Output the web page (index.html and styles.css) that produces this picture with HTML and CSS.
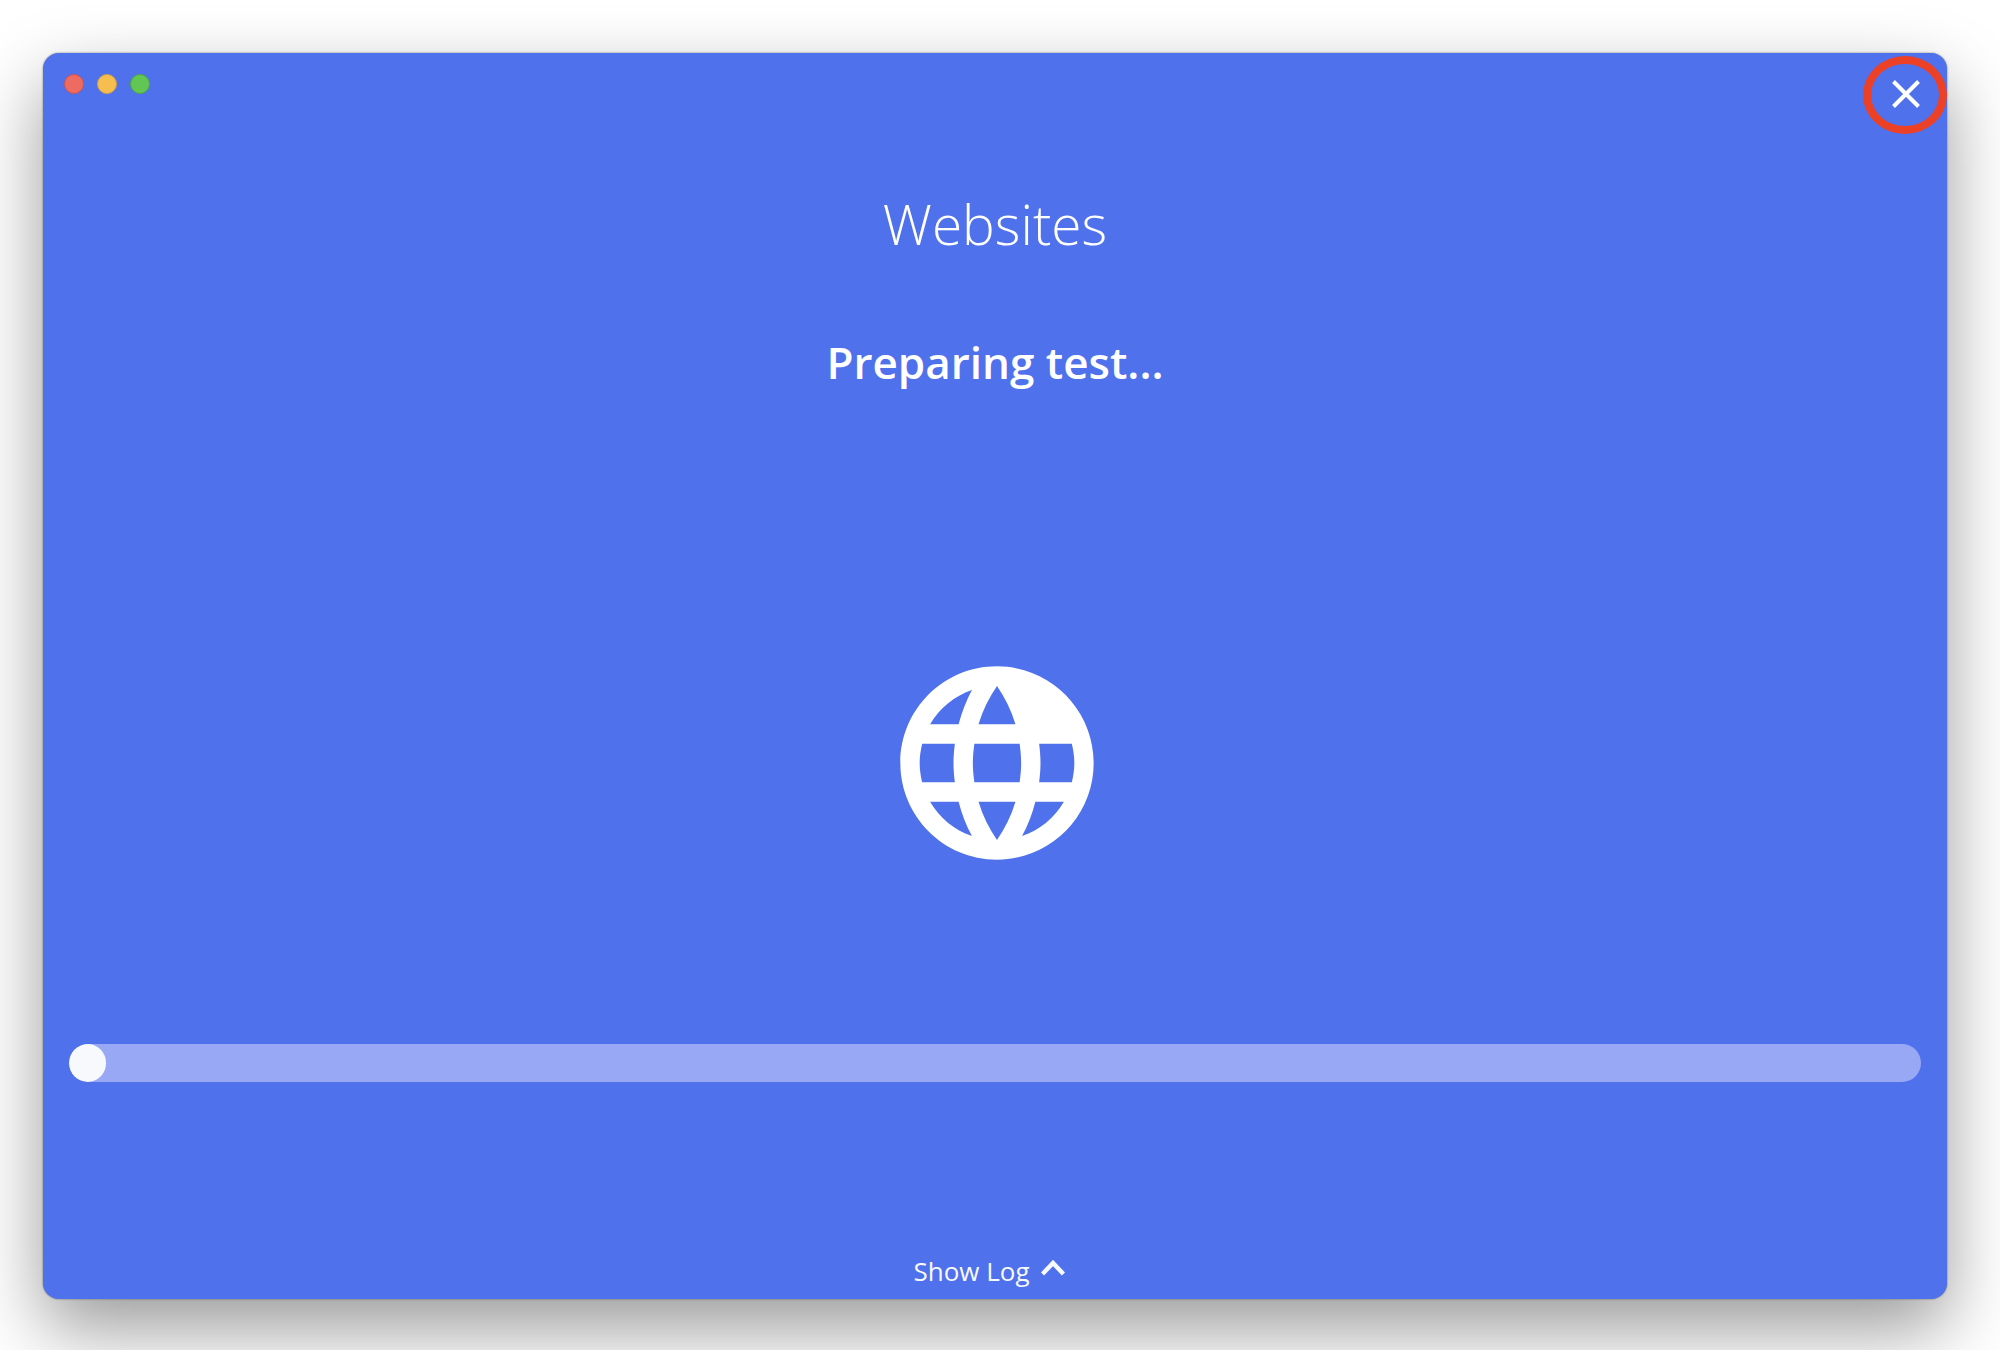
FILE: index.html
```
<!DOCTYPE html>
<html lang="en">
<head>
<meta charset="utf-8">
<title>Websites</title>
<link rel="stylesheet" href="styles.css">
</head>
<body>
<div class="window">
  <header class="titlebar">
    <div class="lights">
      <span class="light light-red"></span>
      <span class="light light-yellow"></span>
      <span class="light light-green"></span>
    </div>
    <button class="close" type="button" aria-label="Close">
      <svg width="28" height="28" viewBox="0 0 28 28" aria-hidden="true"><path d="M1.500 1.500l25 25M26.500 1.500l-25 25" fill="none" stroke="currentColor" stroke-width="4"/></svg>
    </button>
  </header>
  <main class="content">
    <h1 class="title">Websites</h1>
    <p class="status" id="status">Preparing test...</p>
    <div class="stage">
      <svg class="globe" viewBox="0 0 24 24" aria-hidden="true"><path fill="currentColor" fill-rule="evenodd" d="M11.99 2C6.47 2 2 6.48 2 12s4.47 10 9.99 10C17.52 22 22 17.52 22 12S17.52 2 11.99 2zM12 4.04c.83 1.2 1.48 2.53 1.91 3.96h-3.82c.43-1.43 1.08-2.76 1.91-3.96zM4.26 14C4.1 13.36 4 12.69 4 12s.1-1.36.26-2h3.38c-.08.66-.14 1.32-.14 2 0 .68.06 1.34.14 2H4.26zm.82 2h2.95c.32 1.25.78 2.45 1.38 3.56-1.84-.63-3.37-1.9-4.33-3.56zm2.95-8H5.08c.96-1.66 2.49-2.93 4.33-3.56C8.81 5.55 8.35 6.75 8.03 8zM12 19.96c-.83-1.2-1.48-2.53-1.91-3.96h3.82c-.43 1.43-1.08 2.76-1.91 3.96zM14.34 14H9.66c-.09-.66-.16-1.32-.16-2 0-.68.07-1.35.16-2h4.68c.09.65.16 1.32.16 2 0 .68-.07 1.34-.16 2zm.25 5.56c.6-1.11 1.06-2.31 1.38-3.56h2.95c-.96 1.65-2.49 2.93-4.33 3.56zM16.36 14c.08-.66.14-1.32.14-2 0-.68-.06-1.34-.14-2h3.38c.16.64.26 1.31.26 2s-.1 1.36-.26 2h-3.38z"/></svg>
    </div>
    <progress class="progress" value="2" max="100" aria-labelledby="status"></progress>
  </main>
  <footer class="footer">
    <button class="log" type="button">
      <span>Show Log</span>
      <svg class="chevron" width="24" height="16" viewBox="0 0 24 16" aria-hidden="true"><path d="M1.500 14L12 3l10.500 11" fill="none" stroke="currentColor" stroke-width="4.400"/></svg>
    </button>
  </footer>
</div>
</body>
</html>
```
FILE: styles.css
```
* {
  box-sizing: border-box;
}

body {
  margin: 0;
  min-height: 100vh;
  display: flex;
  padding: 53px 53px 51px 43px;
  background: #fff;
  color: #fff;
  font-family: "Open Sans", "Noto Sans", sans-serif;
}

.window {
  flex: 1;
  display: flex;
  flex-direction: column;
  border-radius: 16px;
  background: #4f71ec;
  box-shadow: 0 0 2px rgba(0, 0, 0, 0.5), 0 30px 72px rgba(0, 0, 0, 0.4);
}

.titlebar {
  display: flex;
  justify-content: space-between;
  align-items: flex-start;
  padding: 3px 0 0 21px;
}

.lights {
  display: flex;
  gap: 13px;
  padding-top: 18px;
}

.light {
  width: 20px;
  height: 20px;
  border: 1px solid;
  border-radius: 50%;
}

.light-red {
  background: #ed6b60;
  border-color: #d5504a;
}

.light-yellow {
  background: #f5be4f;
  border-color: #d6a043;
}

.light-green {
  background: #62c655;
  border-color: #4ea73f;
}

.close {
  display: flex;
  align-items: center;
  justify-content: center;
  width: 84px;
  height: 78px;
  padding: 0 0 2px 2px;
  border: 8px solid #ec4027;
  border-radius: 50%;
  background: none;
  color: #fff;
}

.content {
  flex: 1;
  display: flex;
  flex-direction: column;
  padding: 50px 26px 0;
  text-align: center;
}

.title {
  margin: 0;
  font-size: 55px;
  line-height: 80px;
  font-weight: 300;
}

.status {
  margin: 66px 0 0;
  font-size: 44px;
  line-height: 64px;
  font-weight: 600;
}

.stage {
  flex: 1;
  display: flex;
  align-items: center;
  justify-content: center;
  padding: 184px 0 96px 4px;
}

.globe {
  width: 232px;
  height: 232px;
}

.progress {
  appearance: none;
  display: block;
  width: 100%;
  height: 38px;
  border: 0;
  border-radius: 19px;
  overflow: hidden;
  background: #98a8f5;
}

.progress::-webkit-progress-bar {
  background: #98a8f5;
}

.progress::-webkit-progress-value {
  border-radius: 19px;
  background: #f8f9fd;
}

.footer {
  display: flex;
  justify-content: center;
  padding: 169px 0 8px;
}

.log {
  display: flex;
  align-items: center;
  gap: 11px;
  padding: 0 12px 0 0;
  border: 0;
  background: none;
  color: #f8f9fd;
  font: 400 26px/40px "Open Sans", "Noto Sans", sans-serif;
}

.chevron {
  margin-bottom: 6px;
}
```
